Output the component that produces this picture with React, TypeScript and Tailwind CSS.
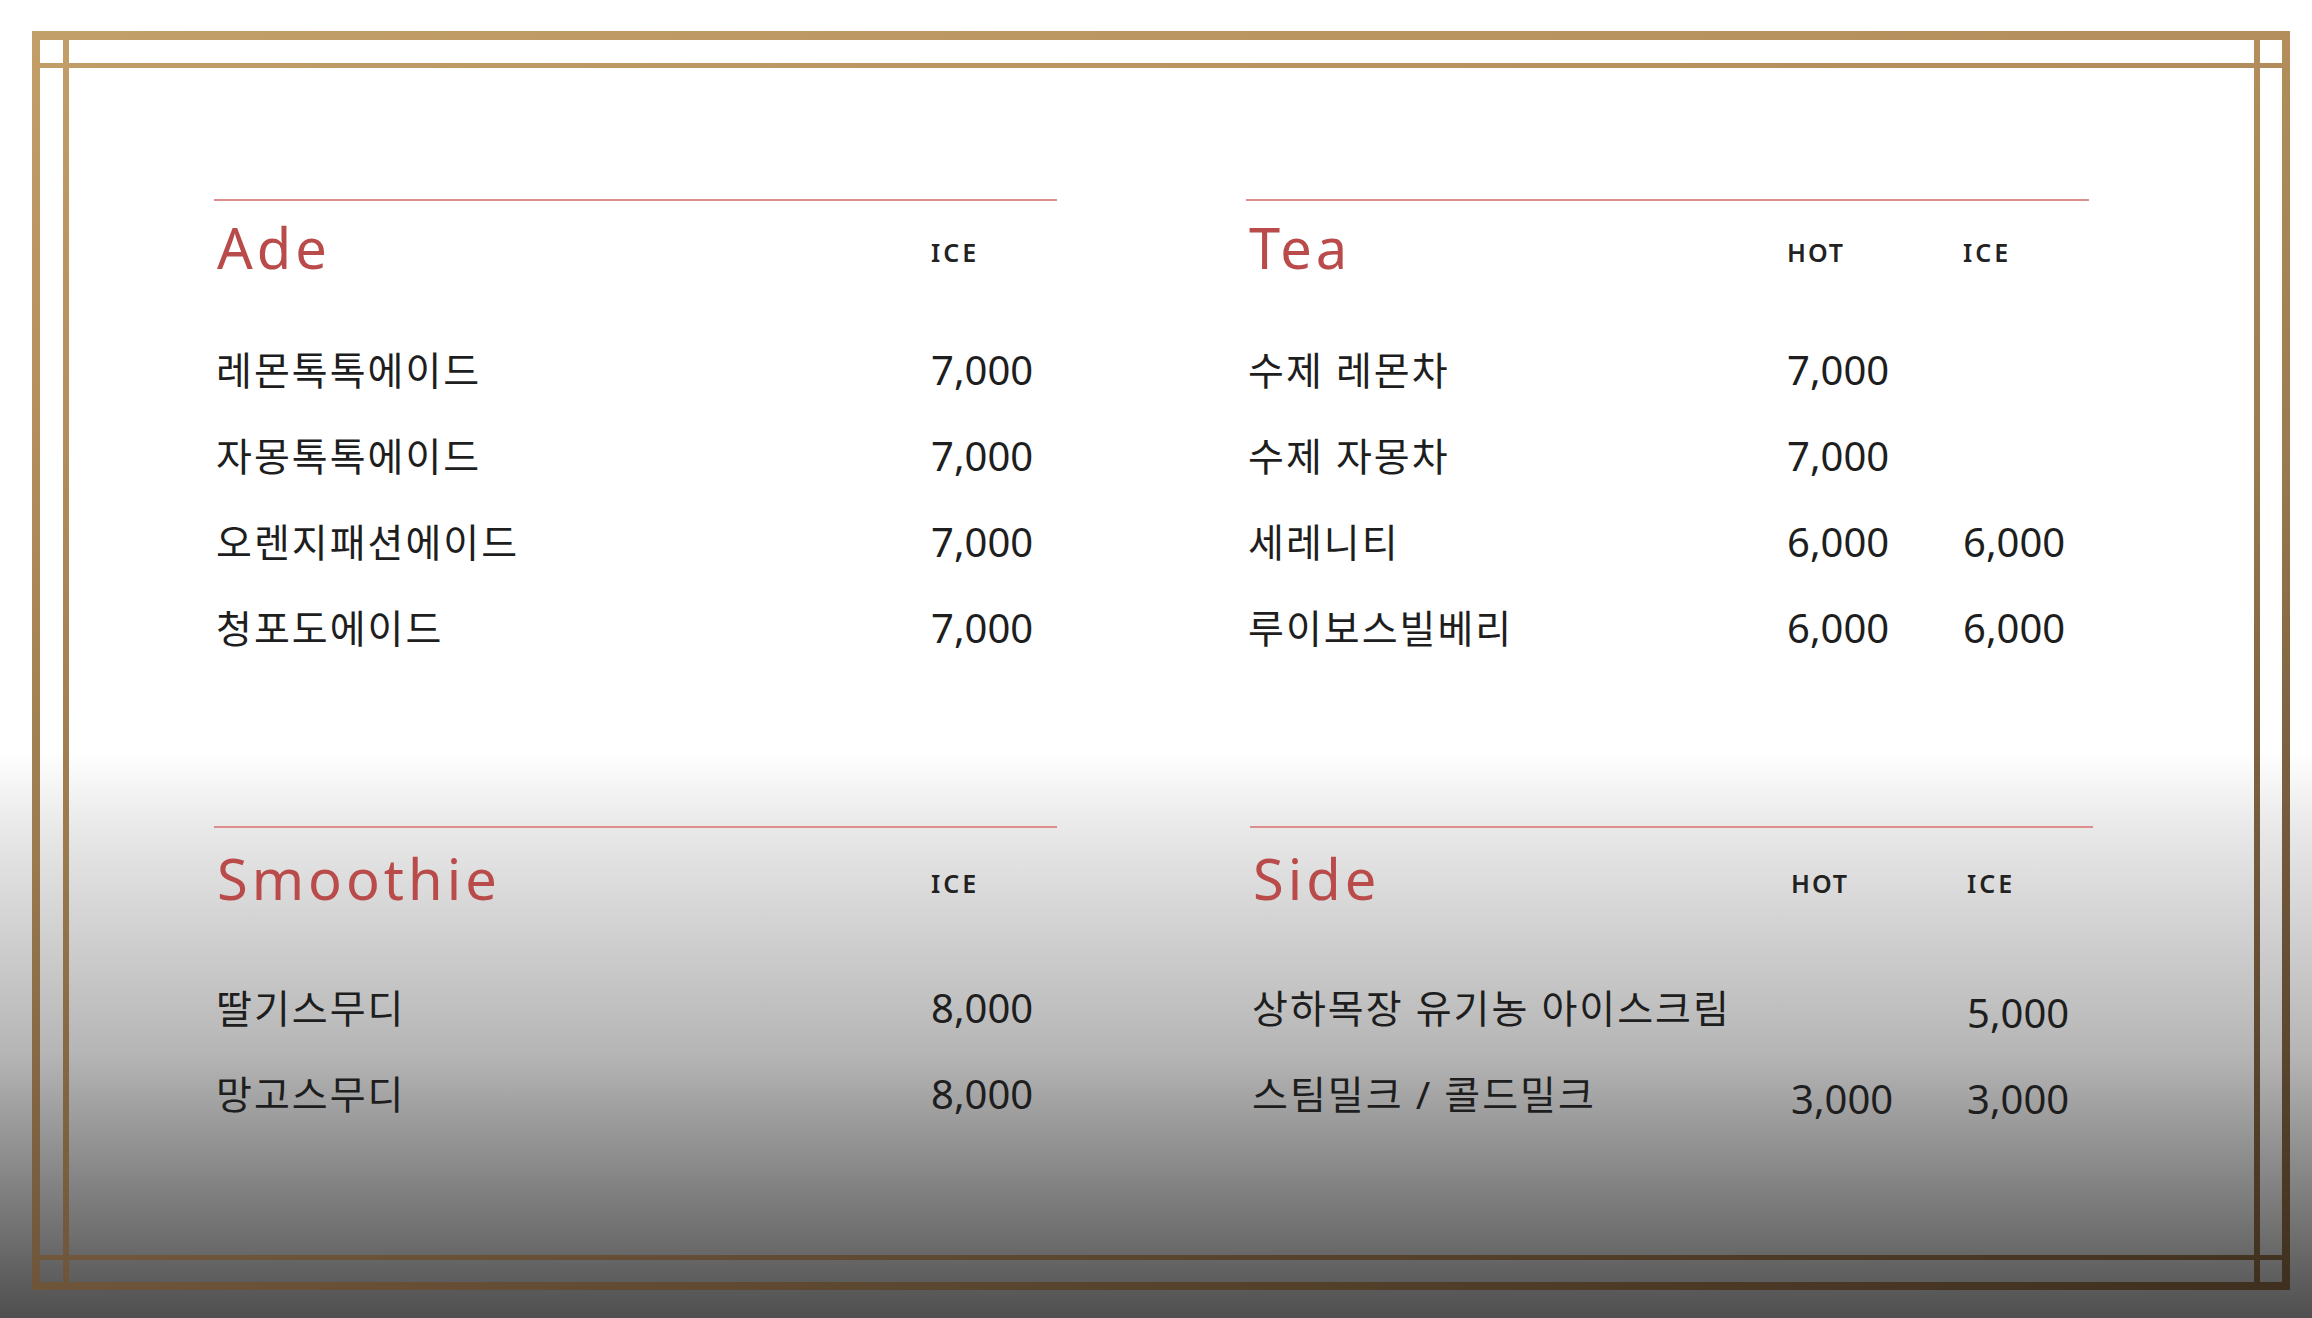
import React from 'react';

type Row = { name: string; hot?: string; ice?: string };

type MenuSection = {
  title: string;
  hot: boolean;
  rows: Row[];
  headGap: string;
  listGap: string;
  shift?: string;
  priceDrop?: string;
};

const top: MenuSection[] = [
  {
    title: 'Ade',
    hot: false,
    headGap: 'mt-[14px]',
    listGap: 'mt-[48px]',
    rows: [
      { name: '레몬톡톡에이드', ice: '7,000' },
      { name: '자몽톡톡에이드', ice: '7,000' },
      { name: '오렌지패션에이드', ice: '7,000' },
      { name: '청포도에이드', ice: '7,000' },
    ],
  },
  {
    title: 'Tea',
    hot: true,
    headGap: 'mt-[14px]',
    listGap: 'mt-[48px]',
    rows: [
      { name: '수제 레몬차', hot: '7,000' },
      { name: '수제 자몽차', hot: '7,000' },
      { name: '세레니티', hot: '6,000', ice: '6,000' },
      { name: '루이보스빌베리', hot: '6,000', ice: '6,000' },
    ],
  },
];

const bottom: MenuSection[] = [
  {
    title: 'Smoothie',
    hot: false,
    headGap: 'mt-[18px]',
    listGap: 'mt-[55px]',
    rows: [
      { name: '딸기스무디', ice: '8,000' },
      { name: '망고스무디', ice: '8,000' },
    ],
  },
  {
    title: 'Side',
    hot: true,
    headGap: 'mt-[18px]',
    listGap: 'mt-[55px]',
    shift: 'ml-[4px]',
    priceDrop: 'pt-[10px]',
    rows: [
      { name: '상하목장 유기농 아이스크림', ice: '5,000' },
      { name: '스팀밀크 / 콜드밀크', hot: '3,000', ice: '3,000' },
    ],
  },
];

const gold =
  'bg-fixed bg-[linear-gradient(170deg,#c4a06a_0%,#b48e5c_25%,#9a7a4e_50%,#6e553a_75%,#3a2c1c_100%)]';

const Section: React.FC<{ s: MenuSection }> = ({ s }) => (
  <div className={`w-[843px] ${s.shift ?? ''}`}>
    <div className="h-[2px] bg-[#dc8e8c]" />
    <div className={`grid grid-cols-[541px_176px_1fr] items-end ${s.headGap}`}>
      <h2 className="pl-[3px] text-[56px] leading-[64px] tracking-[4px] text-[#b94c4a]">{s.title}</h2>
      <span className="pb-[14px] text-[25px] leading-[25px] font-semibold tracking-[2px] text-[#222]">{s.hot ? 'HOT' : ''}</span>
      <span className="pb-[14px] text-[25px] leading-[25px] font-semibold tracking-[3px] text-[#222]">ICE</span>
    </div>
    <div className={s.listGap}>
      {s.rows.map(r => (
        <div key={r.name} className="grid h-[86px] grid-cols-[541px_176px_1fr] items-center text-[#1e1e1e]">
          <span className="pl-[2px] text-[39px] tracking-[2px]">{r.name}</span>
          <span className={`text-[40px] ${s.priceDrop ?? ''}`}>{r.hot ?? ''}</span>
          <span className={`text-[40px] ${s.priceDrop ?? ''}`}>{r.ice ?? ''}</span>
        </div>
      ))}
    </div>
  </div>
);

export default function App() {
  return (
    <div className="h-[1318px] w-full overflow-hidden bg-[linear-gradient(to_bottom,#ffffff_0%,#ffffff_57%,#e8e8e8_63%,#b5b5b5_80%,#4f4f4f_100%)] pt-[31px] pl-[32px] font-['Noto_Sans','Noto_Sans_CJK_KR',sans-serif]">
      <div className="relative h-[1259px] w-[2258px]">
        {/* outer frame */}
        <div className={`pointer-events-none absolute left-0 top-0 h-[9px] w-full ${gold}`} />
        <div className={`pointer-events-none absolute bottom-0 left-0 h-[8px] w-full ${gold}`} />
        <div className={`pointer-events-none absolute left-0 top-0 h-full w-[8px] ${gold}`} />
        <div className={`pointer-events-none absolute right-0 top-0 h-full w-[8px] ${gold}`} />
        {/* inner lines */}
        <div className={`pointer-events-none absolute left-[8px] right-[8px] top-[32px] h-[5px] ${gold}`} />
        <div className={`pointer-events-none absolute left-[8px] right-[8px] top-[1224px] h-[5px] ${gold}`} />
        <div className={`pointer-events-none absolute bottom-[8px] top-[9px] left-[31px] w-[6px] ${gold}`} />
        <div className={`pointer-events-none absolute bottom-[8px] top-[9px] left-[2222px] w-[6px] ${gold}`} />

        <div className="pl-[182px] pt-[168px]">
          <div className="grid h-[627px] grid-cols-[843px_843px] gap-x-[189px]">
            {top.map(s => (
              <Section key={s.title} s={s} />
            ))}
          </div>
          <div className="grid grid-cols-[843px_843px] gap-x-[189px]">
            {bottom.map(s => (
              <Section key={s.title} s={s} />
            ))}
          </div>
        </div>
      </div>
    </div>
  );
}
